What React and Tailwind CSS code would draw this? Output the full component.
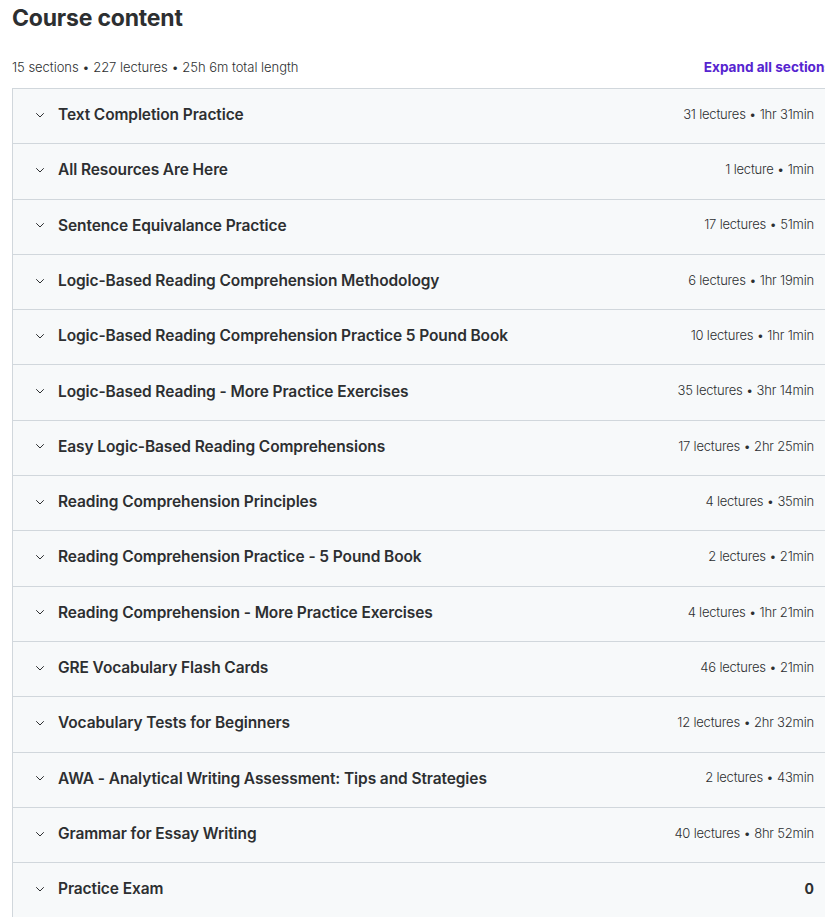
import React from "react";

const sections = [
  ["Text Completion Practice", "31 lectures • 1hr 31min"],
  ["All Resources Are Here", "1 lecture • 1min"],
  ["Sentence Equivalance Practice", "17 lectures • 51min"],
  ["Logic-Based Reading Comprehension Methodology", "6 lectures • 1hr 19min"],
  ["Logic-Based Reading Comprehension Practice 5 Pound Book", "10 lectures • 1hr 1min"],
  ["Logic-Based Reading - More Practice Exercises", "35 lectures • 3hr 14min"],
  ["Easy Logic-Based Reading Comprehensions", "17 lectures • 2hr 25min"],
  ["Reading Comprehension Principles", "4 lectures • 35min"],
  ["Reading Comprehension Practice - 5 Pound Book", "2 lectures • 21min"],
  ["Reading Comprehension - More Practice Exercises", "4 lectures • 1hr 21min"],
  ["GRE Vocabulary Flash Cards", "46 lectures • 21min"],
  ["Vocabulary Tests for Beginners", "12 lectures • 2hr 32min"],
  ["AWA - Analytical Writing Assessment: Tips and Strategies", "2 lectures • 43min"],
  ["Grammar for Essay Writing", "40 lectures • 8hr 52min"],
  ["Practice Exam", "0"],
];

function Chevron() {
  return (
    <svg width="12" height="12" viewBox="0 0 24 24" fill="none" stroke="#2d2f31" strokeWidth="2" strokeLinecap="round" strokeLinejoin="round">
      <path d="M5 9l7 7 7-7" />
    </svg>
  );
}

export default function App() {
  return (
    <div className="w-[825px] h-[917px] overflow-hidden bg-white" style={{ fontFamily: "Inter, 'Noto Sans', sans-serif" }}>
      <div className="w-[820px] ml-[12px] text-[#2d2f31]">
        <h2 className="text-[23px] font-bold leading-[36px] tracking-[-0.2px]">Course content</h2>
        <div className="flex items-end justify-between mt-[21px] mb-[11px]">
          <span className="text-[13px] leading-[20px] tracking-[-0.03px] font-light">15 sections • 227 lectures • 25h 6m total length</span>
          <span className="text-[13.6px] leading-[20px] font-bold text-[#5624d0]">Expand all sections</span>
        </div>
        <div className="border-l border-r border-b border-[#d1d7dc]">
          {sections.map(([title, meta], i) => (
            <div key={i} className="flex items-center justify-between border-t border-[#d1d7dc] bg-[#f7f9fa] h-[55.3px] pb-[3px] pl-[21px] pr-[17px]">
              <div className="flex items-center gap-[12px]">
                <Chevron />
                <span className="text-[15.5px] font-semibold tracking-[-0.1px]">{title}</span>
              </div>
              <span className={meta === "0" ? "text-[14px] font-bold" : "text-[13px] font-light tracking-[-0.2px]"}>{meta}</span>
            </div>
          ))}
        </div>
      </div>
    </div>
  );
}
